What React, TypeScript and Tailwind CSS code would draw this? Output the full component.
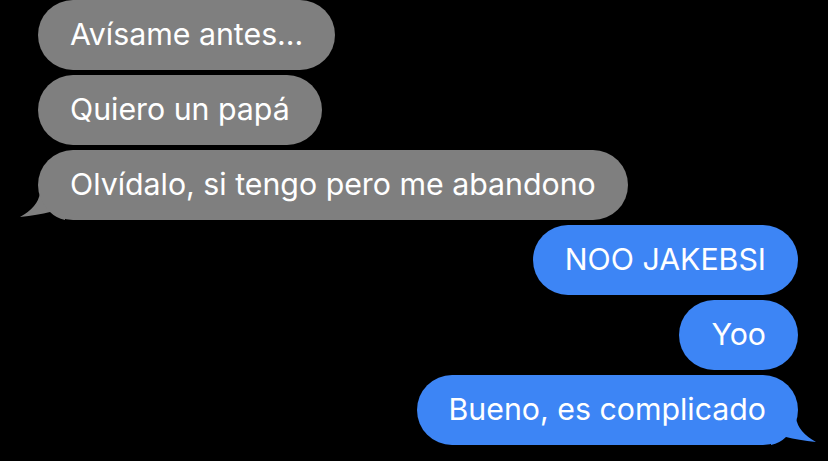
const GRAY = 'bg-[#7f7f7f]';
const BLUE = 'bg-[#3d85f5]';

type Msg = { text: string; mine: boolean; tail?: boolean };

const messages: Msg[] = [
  { text: 'Avísame antes...', mine: false },
  { text: 'Quiero un papá', mine: false },
  { text: 'Olvídalo, si tengo pero me abandono', mine: false, tail: true },
  { text: 'NOO JAKEBSI', mine: true },
  { text: 'Yoo', mine: true },
  { text: 'Bueno, es complicado', mine: true, tail: true },
];

function Tail({ mine }: { mine: boolean }) {
  return (
    <svg
      width="50"
      height="40"
      viewBox="0 0 50 40"
      className={`absolute top-[35px] ${mine ? 'right-[-20px] -scale-x-100' : 'left-[-20px]'}`}
    >
      <path
        d="M22 0 L22 8 Q20 22 2 32 Q20 30 32 27 Q38 33 47 35 L47 0 Z"
        fill={mine ? '#3d85f5' : '#7f7f7f'}
      />
    </svg>
  );
}

function Bubble({ msg }: { msg: Msg }) {
  return (
    <div className="relative">
      <div
        className={`relative z-10 h-[70px] flex items-center px-[32px] rounded-full text-white text-[30.3px] ${
          msg.mine ? BLUE : GRAY
        }`}
      >
        {msg.text}
      </div>
      {msg.tail && <Tail mine={msg.mine} />}
    </div>
  );
}

export default function App() {
  return (
    <div
      className="w-[828px] h-[461px] bg-black overflow-hidden flex flex-col gap-[5px] pl-[38px] pr-[30px]"
      style={{ fontFamily: 'Inter, "Noto Sans", sans-serif' }}
    >
      {messages.map((m, i) => (
        <div key={i} className={`flex ${m.mine ? 'justify-end' : 'justify-start'}`}>
          <Bubble msg={m} />
        </div>
      ))}
    </div>
  );
}
